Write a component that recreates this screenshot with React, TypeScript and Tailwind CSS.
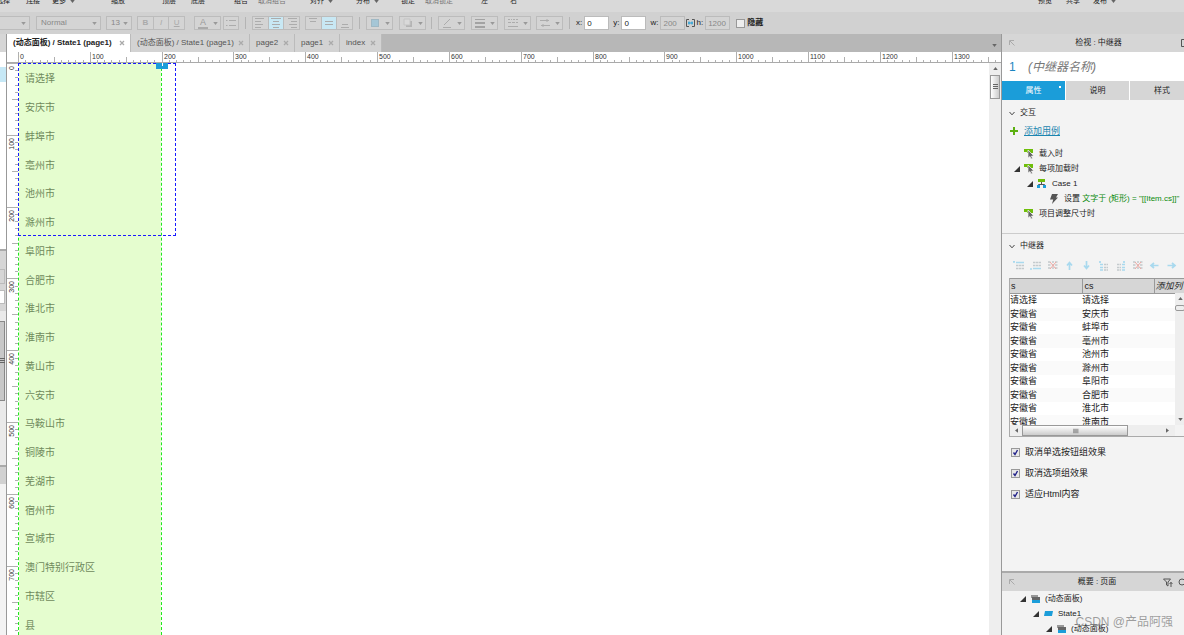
import type { ReactNode } from 'react';
import { clsx } from 'clsx';

const MENU_LEFT = [
  { label: '选择', gap: '-ml-1' },
  { label: '连接', gap: 'ml-4' },
  { label: '更多', gap: 'ml-3', more: true },
  { label: '缩放', gap: 'ml-9' },
  { label: '顶层', gap: 'ml-[37px]' },
  { label: '底层', gap: 'ml-[15px]' },
  { label: '组合', gap: 'ml-[29px]' },
  { label: '取消组合', gap: 'ml-[10px]', muted: true },
  { label: '对齐', gap: 'ml-6', more: true },
  { label: '分布', gap: 'ml-[23px]', more: true },
  { label: '锁定', gap: 'ml-[22px]' },
  { label: '取消锁定', gap: 'ml-[10px]', muted: true },
  { label: '左', gap: 'ml-7' },
  { label: '右', gap: 'ml-[22px]' },
];

const MENU_RIGHT = [
  { label: '预览', gap: '' },
  { label: '共享', gap: 'ml-[14px]' },
  { label: '发布', gap: 'ml-[13px]', more: true },
];

const FILE_TABS = [
  { label: '(动态面板) / State1 (page1)', active: true, width: 'w-[124px]' },
  { label: '(动态面板) / State1 (page1)', width: 'w-[119px]' },
  { label: 'page2', width: 'w-[45px]' },
  { label: 'page1', width: 'w-[45px]' },
  { label: 'index', width: 'w-[42px]' },
];

const CITIES = [
  '请选择', '安庆市', '蚌埠市', '亳州市', '池州市', '滁州市', '阜阳市', '合肥市', '淮北市', '淮南市',
  '黄山市', '六安市', '马鞍山市', '铜陵市', '芜湖市', '宿州市', '宣城市', '澳门特别行政区', '市辖区', '县',
];

const ROWS = CITIES.slice(0, 10).map((cs, i) => ({ s: i === 0 ? '请选择' : '安徽省', cs }));

const OPTIONS = ['取消单选按钮组效果', '取消选项组效果', '适应Html内容'];

// 100 canvas units on the ruler, in pixels
const STEP = 71.83;

export default function App() {
  return (
    <div className="flex h-screen w-full flex-col overflow-hidden bg-[#f3f3f3] font-['Liberation_Sans','Noto_Sans_CJK_SC',sans-serif] text-[8px] text-[#222]">
      <MenuBar />
      <Toolbar />
      <div className="flex min-h-0 flex-1">
        <LeftEdge />
        <main className="flex min-w-0 flex-1 flex-col border-l border-[#999]">
          <FileTabs />
          <HRuler />
          <div className="flex min-h-0 flex-1">
            <VRuler />
            <Canvas />
            <div className="flex w-3 shrink-0 flex-col items-center bg-[#eee]">
              <Arrow className="mt-1 rotate-180" />
              <div className="mt-[5px] flex h-6 w-[10px] items-center justify-center border border-[#999] bg-gradient-to-r from-white to-[#ccc]">
                <Grip />
              </div>
            </div>
          </div>
        </main>
        <Inspector />
      </div>
    </div>
  );
}

function MenuLabel({ label, gap, muted, more }: { label: string; gap: string; muted?: boolean; more?: boolean }) {
  return (
    <button className={clsx('flex shrink-0 items-center gap-1 text-[7px] leading-[10px]', gap, muted ? 'text-[#777]' : 'text-[#222]')}>
      <span>{label}</span>
      {more && <Arrow />}
    </button>
  );
}

function MenuBar() {
  return (
    <header className="flex h-3 shrink-0 items-end justify-between overflow-hidden bg-[#d9d9d9] pb-[6px]">
      <div className="flex">
        {MENU_LEFT.map((m) => <MenuLabel key={m.label} {...m} />)}
      </div>
      <div className="mr-[68px] flex">
        {MENU_RIGHT.map((m) => <MenuLabel key={m.label} {...m} />)}
      </div>
    </header>
  );
}

function Arrow({ className, color = '#666' }: { className?: string; color?: string }) {
  return (
    <svg viewBox="0 0 6 4" className={clsx('h-[3px] w-[5px] shrink-0', className)}>
      <path d="M0 0h6L3 4z" fill={color} />
    </svg>
  );
}

function Grip({ className }: { className?: string }) {
  return (
    <svg viewBox="0 0 5 6" className={clsx('h-[6px] w-[5px] shrink-0', className)}>
      <path d="M0 .5h5M0 2.5h5M0 4.5h5" stroke="#666" />
    </svg>
  );
}

function Sep({ className }: { className?: string }) {
  return <span className={clsx('h-3 w-px shrink-0 bg-[#b4b4b4]', className)} />;
}

function Select({ label, value, className }: { label: string; value: string; className: string }) {
  return (
    <span className={clsx('relative flex h-[14px] shrink-0 items-center border border-[#bcbcbc] bg-[#d4d4d4]', className)}>
      <select aria-label={label} className="h-full w-full appearance-none pl-1 text-[8px] leading-[10px] text-[#888] outline-none">
        <option>{value}</option>
      </select>
      <Arrow className="pointer-events-none absolute right-[3px]" color="#999" />
    </span>
  );
}

function IconGroup({ className, children }: { className?: string; children: ReactNode }) {
  return (
    <div className={clsx('flex h-[14px] shrink-0 divide-x divide-[#bcbcbc] border border-[#bcbcbc] bg-[#d4d4d4] text-[#aaa]', className)}>
      {children}
    </div>
  );
}

function ToolButton({ label, active, children }: { label: string; active?: boolean; children: ReactNode }) {
  return (
    <button aria-label={label} className={clsx('flex flex-1 items-center justify-center', active && 'bg-[#c8e8f4]')}>
      {children}
    </button>
  );
}

function Lines({ d }: { d: string }) {
  return (
    <svg viewBox="0 0 10 10" className="h-[10px] w-[10px]">
      <path d={d} stroke="#acacac" fill="none" />
    </svg>
  );
}

function DropButton({ label, className, children }: { label: string; className?: string; children: ReactNode }) {
  return (
    <button aria-label={label} className={clsx('flex h-[14px] w-[27px] shrink-0 items-center justify-between border border-[#bcbcbc] bg-[#d4d4d4] pl-[3px] pr-[2px] text-[#999]', className)}>
      {children}
      <Arrow color="#999" />
    </button>
  );
}

function Field({ label, value, className, disabled }: { label: string; value: string; className?: string; disabled?: boolean }) {
  return (
    <label className={clsx('flex shrink-0 items-center gap-[2px] text-[8px] leading-[10px]', className)}>
      {label}
      <input
        defaultValue={value}
        disabled={disabled}
        className={clsx('h-[14px] w-[25px] border border-[#bbb] pl-[2px] text-[8px] leading-[10px]', disabled ? 'bg-[#d4d4d4] text-[#888]' : 'bg-white text-[#222]')}
      />
    </label>
  );
}

function Toolbar() {
  return (
    <div className="flex h-[22px] shrink-0 items-center overflow-hidden bg-[#d1d1d1]">
      <Select label="样式" value="" className="-ml-1 w-[34px]" />
      <Select label="字重" value="Normal" className="ml-[6px] w-[65px]" />
      <Select label="字号" value="13" className="ml-[5px] w-[26px]" />
      <IconGroup className="ml-[5px] w-12">
        <ToolButton label="加粗"><b>B</b></ToolButton>
        <ToolButton label="斜体"><i>I</i></ToolButton>
        <ToolButton label="下划线"><u>U</u></ToolButton>
      </IconGroup>
      <DropButton label="文字颜色" className="ml-[9px]">
        <span className="w-[10px] border-b-2 border-[#aaa] text-[9px] leading-[9px]">A</span>
      </DropButton>
      <IconGroup className="ml-[2px] w-4">
        <ToolButton label="项目符号"><Lines d="M0 2.5h1.5M3 2.5h7M0 7.5h1.5M3 7.5h7" /></ToolButton>
      </IconGroup>
      <Sep className="ml-[6px]" />
      <IconGroup className="ml-[6px] w-12">
        <ToolButton label="左对齐"><Lines d="M0 .5h9M0 3.5h6M0 6.5h8M0 9.5h6" /></ToolButton>
        <ToolButton label="居中" active><Lines d="M0 .5h10M2 3.5h6M1 6.5h8M2 9.5h6" /></ToolButton>
        <ToolButton label="右对齐"><Lines d="M1 .5h9M4 3.5h6M2 6.5h8M4 9.5h6" /></ToolButton>
      </IconGroup>
      <IconGroup className="ml-[5px] w-12">
        <ToolButton label="顶部对齐"><Lines d="M1 .5h8M2 3.5h6" /></ToolButton>
        <ToolButton label="垂直居中" active><Lines d="M1 3.5h8M1 6.5h8" /></ToolButton>
        <ToolButton label="底部对齐"><Lines d="M2 6.5h6M1 9.5h8" /></ToolButton>
      </IconGroup>
      <Sep className="ml-[6px]" />
      <DropButton label="填充" className="ml-[6px]">
        <span className="ml-px size-2 border border-[#9fb8c4] bg-[#a5c6d6]" />
      </DropButton>
      <DropButton label="阴影" className="ml-[6px]">
        <svg viewBox="0 0 10 10" className="size-[10px]">
          <path d="M3 3h6v6H3z" fill="#b4b4b4" />
          <path d="M1 1h6v6H1z" fill="#d9d9d9" stroke="#c4c4c4" />
        </svg>
      </DropButton>
      <Sep className="ml-[5px]" />
      <DropButton label="线条颜色" className="ml-[6px]"><Lines d="M1 9.5h8M2 7l6-6" /></DropButton>
      <DropButton label="线宽" className="ml-[6px]">
        <svg viewBox="0 0 10 10" className="size-[10px]"><path d="M0 1h10v1H0zM0 4h10v2H0zM0 8h10v2H0z" fill="#a3a3a3" /></svg>
      </DropButton>
      <DropButton label="线型" className="ml-[6px]"><Lines d="M0 1.5h2M3 1.5h1M5 1.5h2M8 1.5h2M0 4.5h3M4 4.5h3M8 4.5h2M0 8.5h10" /></DropButton>
      <DropButton label="箭头" className="ml-[5px]"><Lines d="M0 2.5h9M7 1v3M1 7.5h9M3 6v3" /></DropButton>
      <Sep className="ml-[6px]" />
      <Field label="x:" value="0" className="ml-[6px]" />
      <Field label="y:" value="0" className="ml-1" />
      <Field label="w:" value="200" className="ml-1" disabled />
      <button aria-label="锁定宽高比" className="ml-px">
        <svg viewBox="0 0 9 8" className="h-2 w-[9px]">
          <path d="M3 .5H.5v7H3M6 .5h2.5v7H6" stroke="#555" fill="none" />
          <path d="M2 4h5M3 2.5v3M6 2.5v3" stroke="#1b9dd9" />
        </svg>
      </button>
      <Field label="h:" value="1200" className="ml-px" disabled />
      <label className="ml-[6px] flex shrink-0 items-center gap-[2px] leading-[10px] font-bold">
        <input type="checkbox" className="size-[9px] appearance-none border border-[#999] bg-[#eee]" />
        隐藏
      </label>
    </div>
  );
}

function LeftEdge() {
  return (
    <aside className="flex w-[6px] shrink-0 flex-col overflow-hidden bg-[#f3f3f3]">
      <div className="h-[18px] shrink-0 bg-[#d6d6d6]" />
      <div className="h-[15px] shrink-0 bg-white" />
      <div className="h-[15px] shrink-0 bg-[#c6e8f6]" />
      <div className="h-[167px] shrink-0 bg-white" />
      <div className="h-[62px] shrink-0 border-t-2 border-[#aaa] bg-[#d6d6d6]">
        <div className="mt-[18px] h-[15px] w-[5px] border border-l-0 border-[#bbb]" />
        <div className="mt-[6px] h-[14px] w-[5px] border border-l-0 border-[#bbb] bg-white" />
      </div>
      <div className="flex h-[154px] shrink-0 flex-col bg-[#eaeaea] pt-[10px]">
        <div className="flex h-[80px] w-[5px] items-center border border-l-0 border-[#888] bg-[#c8c8c8]">
          <Grip />
        </div>
      </div>
      <div className="h-[19px] shrink-0 border-t-2 border-[#aaa] bg-[#d1d1d1]" />
    </aside>
  );
}

function FileTabs() {
  return (
    <nav className="flex h-[18px] shrink-0 items-stretch bg-[#b7b7b7]">
      {FILE_TABS.map((t, i) => (
        <div
          key={i}
          className={clsx(
            'flex shrink-0 items-center justify-between border-r border-[#bbb] pr-[5px] pl-[6px] whitespace-nowrap',
            t.width,
            t.active ? 'bg-white font-bold text-[#222]' : 'bg-[#d3d3d3] text-[#555]',
          )}
        >
          <button>{t.label}</button>
          <button aria-label="关闭">
            <svg viewBox="0 0 6 6" className="size-[6px]"><path d="M1 1l4 4M5 1L1 5" stroke="#aaa" strokeWidth="1.3" /></svg>
          </button>
        </div>
      ))}
      <button aria-label="全部标签" className="mr-1 ml-auto flex items-center"><Arrow className="mt-1" /></button>
    </nav>
  );
}

function HRuler() {
  const ticks = Array.from({ length: 138 }, (_, i) => i);
  return (
    <svg className="block h-[11px] w-full shrink-0 overflow-hidden bg-white" shapeRendering="crispEdges">
      {ticks.map((i) => {
        const x = 11 + Math.round((i * STEP) / 10);
        const y = i % 10 === 0 ? 0 : i % 5 === 0 ? 5 : 8;
        return <rect key={i} x={x} y={y} width={1} height={11 - y} fill="#b0b0b0" />;
      })}
      {ticks.filter((i) => i % 10 === 0).map((i) => (
        <text key={i} x={13 + Math.round((i * STEP) / 10)} y={7} fontSize={7} fill="#333">{i * 10}</text>
      ))}
      <rect x={0} y={10} width="100%" height={1} fill="#aaa" />
    </svg>
  );
}

function VRuler() {
  const ticks = Array.from({ length: 80 }, (_, i) => i);
  return (
    <svg className="block h-full w-[11px] shrink-0 overflow-hidden bg-white" shapeRendering="crispEdges">
      {ticks.map((i) => {
        const y = Math.round((i * STEP) / 10);
        const x = i % 10 === 0 ? 0 : i % 5 === 0 ? 5 : 8;
        return <rect key={i} x={x} y={y} width={11 - x} height={1} fill="#b0b0b0" />;
      })}
      {ticks.filter((i) => i % 10 === 0).map((i) => (
        <text
          key={i}
          fontSize={7}
          fill="#333"
          textAnchor="end"
          transform={`translate(7 ${3 + Math.round((i * STEP) / 10)}) rotate(-90)`}
        >
          {i * 10}
        </text>
      ))}
    </svg>
  );
}

function Canvas() {
  return (
    <div className="relative min-w-0 flex-1 overflow-hidden bg-white">
      <ul className="absolute top-0 left-0 flex h-[577px] w-36 flex-col border-x border-dashed border-[#1ee81e] bg-[#e5fdcf] bg-clip-padding pt-[2px] pl-[6px] text-[10px] text-[#6f8a5c]">
        {CITIES.map((c) => (
          <li key={c} className="flex flex-1 items-center leading-3">{c}</li>
        ))}
      </ul>
      <div className="absolute top-0 left-0 h-[173px] w-[158px] border border-dashed border-[#1a1aff]" />
      <div className="absolute top-0 left-[138px] flex h-[6px] w-3 justify-center bg-[#1b9dd9]">
        <span className="h-[3px] w-px bg-white" />
      </div>
    </div>
  );
}

function PopOut() {
  return (
    <svg viewBox="0 0 6 6" className="size-[6px] shrink-0">
      <path d="M.5 5V.5H5M1 1l4.5 4.5" stroke="#aaa" fill="none" />
    </svg>
  );
}

function SectionTitle({ children }: { children: ReactNode }) {
  return (
    <h2 className="flex items-center gap-[5px] leading-[12px]">
      <svg viewBox="0 0 6 5" className="h-[5px] w-[6px]"><path d="M.5 1L3 3.800 5.500 1" stroke="#444" fill="none" /></svg>
      {children}
    </h2>
  );
}

function Twisty() {
  return (
    <svg viewBox="0 0 6 6" className="size-[6px] shrink-0"><path d="M6 0v6H0z" fill="#333" /></svg>
  );
}

function EventIcon() {
  return (
    <svg viewBox="0 0 10 10" className="size-[10px] shrink-0">
      <path d="M0 0h9v4H0z" fill="#6fbe0a" />
      <path d="M0 3h3v1H0z" fill="#f3f3f3" />
      <path d="M4 1v8l2-1.500 1 2.500 1.500-.6-1-2.400H10z" fill="#666" stroke="#f3f3f3" strokeWidth=".7" />
    </svg>
  );
}

function CaseIcon() {
  return (
    <svg viewBox="0 0 9 9" className="size-[9px] shrink-0">
      <path d="M1 0h7v3H1z" fill="#6fbe0a" />
      <path d="M4.500 3v2M1.500 7V5.500h6V7" stroke="#555" fill="none" />
      <path d="M0 6h3v3H0zM6 6h3v3H6z" fill="#1b9dd9" />
    </svg>
  );
}

function Bolt() {
  return (
    <svg viewBox="0 0 8 10" className="h-[10px] w-2 shrink-0"><path d="M2 0h6L6 3.500h2L2 10l1.200-4.500H0z" fill="#555" /></svg>
  );
}

function EventTree() {
  return (
    <ul className="mt-[8px] leading-[15px] whitespace-nowrap">
      <li className="flex h-[15px] items-center gap-[5px] pl-[22px]"><EventIcon />载入时</li>
      <li>
        <div className="flex h-[15px] items-center pl-3"><Twisty /><span className="ml-1 flex items-center gap-[5px]"><EventIcon />每项加载时</span></div>
        <ul>
          <li>
            <div className="flex h-[15px] items-center pl-[25px]"><Twisty /><span className="ml-1 flex items-center gap-[6px]"><CaseIcon />Case 1</span></div>
            <p className="flex h-[15px] items-center gap-[6px] pl-[48px]">
              <Bolt />
              <span>设置 <span className="text-[#0b8a0b]">文字于 (矩形) = "[[Item.cs]]"</span></span>
            </p>
          </li>
        </ul>
      </li>
      <li className="flex h-[15px] items-center gap-[5px] pl-[22px]"><EventIcon />项目调整尺寸时</li>
    </ul>
  );
}

const GRID = 'M1 1h3M5 1h2M8 1h3M1 4h3M5 4h2M8 4h3M1 7h3M5 7h2M8 7h3';

const ROW_TOOLS = [
  { label: '在上方插入行', a: 'M0 .8h2M3 1.500h8', b: 'M3 4.500h8M3 7.500h8' },
  { label: '在下方插入行', a: 'M0 8h2M3 7.500h8', b: 'M3 1.500h8M3 4.500h8' },
  { label: '删除行', cross: true, b: GRID },
  { label: '上移行', a: 'M5.500 9V2M3 4.500L5.500 1.500 8 4.500' },
  { label: '下移行', a: 'M5.500 0v7M3 4.500L5.500 7.500 8 4.500' },
  { label: '在左侧插入列', a: 'M2 0v2M2 3.500h3M2 6.500h3M2 9h3', b: 'M6 3.500h4M6 6.500h4M6 9h4' },
  { label: '在右侧插入列', a: 'M9 0v2M7 3.500h3M7 6.500h3M7 9h3', b: 'M2 3.500h4M2 6.500h4M2 9h4' },
  { label: '删除列', cross: true, b: GRID },
  { label: '左移列', a: 'M9.500 4.500h-7M5 2L2 4.500 5 7' },
  { label: '右移列', a: 'M1.500 4.500h7M6 2l3 2.500L6 7' },
];

function RepeaterTools() {
  return (
    <div className="mt-[9px] flex gap-[6px] pl-[11px]">
      {ROW_TOOLS.map((t) => (
        <button key={t.label} aria-label={t.label} className="shrink-0">
          <svg viewBox="0 0 11 10" className="h-[10px] w-[11px]" fill="none">
            {t.b && <path d={t.b} stroke="#c4cacd" strokeWidth="1.5" strokeDasharray="2.5 .5" />}
            {t.a && <path d={t.a} stroke="#a9d9ee" strokeWidth="1.7" />}
            {t.cross && <path d="M3 1l6 7M9 1L3 8" stroke="#f0a8a2" />}
          </svg>
        </button>
      ))}
    </div>
  );
}

function RepeaterData() {
  return (
    <div className="mt-[7px] ml-[7px] border-b border-l border-[#aaa]">
      <div className="relative h-[147px] overflow-hidden">
        <table className="h-[151px] w-[184px] table-fixed border-collapse bg-white text-left text-[9px] leading-[13px]">
          <thead>
            <tr className="h-[15px] bg-[#d6d6d6]">
              <th className="w-[72px] border-y border-r border-[#999] p-0 pl-px font-normal">s</th>
              <th className="w-[72px] border-y border-r border-[#999] p-0 pl-[2px] font-normal">cs</th>
              <th className="border-y border-[#999] p-0 pl-px font-normal italic whitespace-nowrap"><button>添加列</button></th>
            </tr>
          </thead>
          <tbody>
            {ROWS.map((r, i) => (
              <tr key={i} className="even:bg-[#fafafa]">
                <td className="p-0">{r.s}</td>
                <td className="p-0">{r.cs}</td>
                <td className="p-0" />
              </tr>
            ))}
          </tbody>
        </table>
        <div className="absolute top-[15px] bottom-0 left-[165px] flex w-[10px] flex-col items-center bg-[#eee] py-1">
          <Arrow className="rotate-180" />
          <div className="mt-[5px] h-[6px] w-[10px] rounded-xs border border-[#999] bg-[#eee]" />
          <Arrow className="mt-auto" />
        </div>
      </div>
      <div className="flex h-[11px] w-[165px] items-center bg-[#eee] pl-1">
        <Arrow className="rotate-90" />
        <div className="ml-[3px] flex h-[11px] w-[106px] items-center justify-center border border-[#999] bg-gradient-to-b from-white to-[#ccc]">
          <Grip className="rotate-90" />
        </div>
        <Arrow className="mr-[5px] ml-auto -rotate-90" />
      </div>
    </div>
  );
}

function PanelHeader({ title, titleClass, children }: { title: string; titleClass: string; children: ReactNode }) {
  return (
    <div className="flex h-[18px] w-48 shrink-0 items-center bg-[#d6d6d6] pl-[7px]">
      <PopOut />
      <h1 className={clsx('flex-1 text-center leading-[12px]', titleClass)}>{title}</h1>
      {children}
    </div>
  );
}

function StackIcon() {
  return (
    <svg viewBox="0 0 9 9" className="size-[9px] shrink-0">
      <path d="M0 1h7v3H0z" fill="#999" />
      <path d="M1 3h8v3H1z" fill="#666" />
      <path d="M1 6h8v3H1z" fill="#1b9dd9" />
    </svg>
  );
}

function Inspector() {
  return (
    <aside className="relative flex w-[183px] shrink-0 flex-col overflow-hidden border-l border-[#999] bg-[#f3f3f3]">
      <PanelHeader title="检视 : 中继器" titleClass="pl-px">
        <svg viewBox="0 0 8 8" className="mr-[5px] size-2"><path d="M8 .5H.5v7H8" stroke="#555" fill="none" /></svg>
      </PanelHeader>
      <div className="flex h-[29px] shrink-0 items-center bg-white pl-[7px]">
        <span className="w-[19px] text-[12px] text-[#1b85c0]">1</span>
        <input
          aria-label="中继器名称"
          placeholder="(中继器名称)"
          className="w-28 text-[12px] leading-4 italic placeholder:text-[#777] outline-none"
        />
      </div>
      <div role="tablist" className="flex h-[19px] w-48 shrink-0 divide-x divide-white bg-[#d6d6d6] leading-[12px]">
        <button role="tab" aria-selected className="relative w-16 bg-[#1b9dd9] text-white">
          属性<span className="absolute top-[5px] right-1 size-[2px] bg-white" />
        </button>
        <button role="tab" className="w-16">说明</button>
        <button role="tab" className="w-16">样式</button>
      </div>

      <section className="shrink-0 border-b border-[#ccc] pt-[7px] pb-3">
        <div className="pl-[7px]">
          <SectionTitle>交互</SectionTitle>
          <div className="mt-[5px] flex h-[14px] items-center gap-[6px]">
            <svg viewBox="0 0 8 8" className="ml-px size-2"><path d="M4 0v8M0 4h8" stroke="#5cb010" strokeWidth="2" /></svg>
            <a href="#case" className="text-[9px] leading-[12px] text-[#1b85b0] underline">添加用例</a>
          </div>
        </div>
        <EventTree />
      </section>

      <section className="shrink-0 pt-[6px]">
        <div className="pl-[7px]"><SectionTitle>中继器</SectionTitle></div>
        <RepeaterTools />
        <RepeaterData />
        <div className="mt-[9px] flex flex-col gap-[9px] pl-[9px]">
          {OPTIONS.map((o) => (
            <label key={o} className="flex items-center gap-[5px] text-[9px] leading-[12px] whitespace-nowrap">
              <span className="relative flex size-[9px]">
                <input type="checkbox" defaultChecked className="size-[9px] appearance-none border border-[#999] bg-[#e8e8e8]" />
                <svg viewBox="0 0 9 9" className="pointer-events-none absolute inset-0 size-[9px]"><path d="M2.500 4.500l1.500 2 2.500-4.500" stroke="#22228a" strokeWidth="1.4" fill="none" /></svg>
              </span>
              {o}
            </label>
          ))}
        </div>
      </section>

      <section className="mt-auto h-16 shrink-0 border-t-2 border-[#aaa]">
        <PanelHeader title="概要 : 页面" titleClass="pl-4">
          <svg viewBox="0 0 22 9" className="mr-[9px] h-[9px] w-[22px]" fill="none" stroke="#555">
            <path d="M.5 1h7L5 4v4L3.500 7V4zM8 4v5M6.500 6L8 4.500 9.500 6" />
            <circle cx="19" cy="4" r="3" />
          </svg>
        </PanelHeader>
        <ul className="leading-[15px] whitespace-nowrap">
          <li className="flex h-[15px] items-center gap-[5px] pl-[18px]"><Twisty /><StackIcon />(动态面板)</li>
          <li className="flex h-[15px] items-center gap-[5px] pl-[31px]">
            <Twisty />
            <svg viewBox="0 0 9 5" className="h-[5px] w-[9px]"><path d="M1 0h8L8 5H0z" fill="#1b9dd9" /></svg>
            State1
          </li>
          <li className="flex h-[15px] items-center gap-[5px] pl-[44px]"><Twisty /><StackIcon />(动态面板)</li>
        </ul>
      </section>
      <p className="absolute right-[11px] bottom-[5px] text-[12px] leading-4 whitespace-nowrap text-[#777]/70">CSDN @产品阿强</p>
    </aside>
  );
}
